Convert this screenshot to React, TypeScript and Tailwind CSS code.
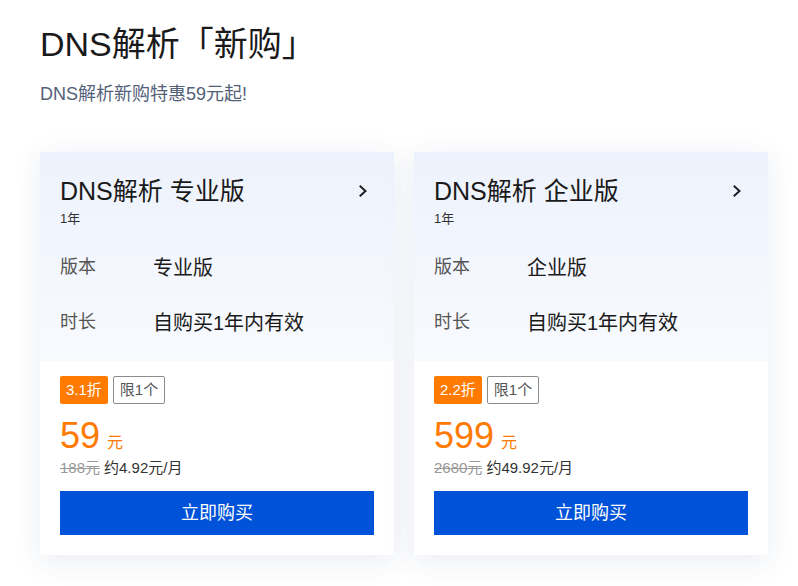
import React from "react";

const font = { fontFamily: '"Liberation Sans", "Noto Sans CJK SC", sans-serif' };

type Plan = {
  name: string;
  edition: string;
  discount: string;
  price: string;
  original: string;
  monthly: string;
};

const plans: Plan[] = [
  { name: "DNS解析 专业版", edition: "专业版", discount: "3.1折", price: "59", original: "188元", monthly: "约4.92元/月" },
  { name: "DNS解析 企业版", edition: "企业版", discount: "2.2折", price: "599", original: "2680元", monthly: "约49.92元/月" },
];

function Chevron() {
  return (
    <svg width="14" height="14" viewBox="0 0 14 14" className="mr-[4px]">
      <path d="M4.5 2.5 L9.5 7 L4.5 11.5" fill="none" stroke="#1f1f1f" strokeWidth="2" strokeLinecap="square" strokeLinejoin="miter" />
    </svg>
  );
}

function Card({ p }: { p: Plan }) {
  return (
    <div className="w-[354px] shrink-0 bg-white shadow-[0_6px_28px_rgba(20,50,120,0.09)]">
      <div className="bg-gradient-to-b from-[#edf2fc] to-[#f8fafe] px-[20px] pt-[23px] pb-[11px]">
        <div className="flex items-center justify-between">
          <div className="text-[25px] leading-[32px] text-[#1a1a1a]">{p.name}</div>
          <Chevron />
        </div>
        <div className="mt-[2px] text-[13px] leading-[20px] text-[#333]">1年</div>
        <div className="mt-[11px]">
          <div className="flex h-[55px] items-center">
            <div className="w-[93px] text-[18px] text-[#555]">版本</div>
            <div className="text-[20px] text-[#1a1a1a]">{p.edition}</div>
          </div>
          <div className="flex h-[55px] items-center">
            <div className="w-[93px] text-[18px] text-[#555]">时长</div>
            <div className="text-[20px] text-[#1a1a1a]">自购买1年内有效</div>
          </div>
        </div>
      </div>
      <div className="px-[20px] pt-[15px] pb-[20px]">
        <div className="flex gap-[5px]">
          <span className="flex h-[28px] items-center rounded-[2px] bg-[#ff7a00] px-[6px] text-[15px] text-white">{p.discount}</span>
          <span className="flex h-[28px] items-center rounded-[2px] border border-[#8c8c8c] px-[6px] text-[15px] text-[#555]">限1个</span>
        </div>
        <div className="mt-[12px] flex items-baseline text-[#ff7a00]">
          <span className="text-[36px] leading-[40px]">{p.price}</span>
          <span className="ml-[7px] text-[16px]">元</span>
        </div>
        <div className="flex h-[24px] items-center text-[15px]">
          <span className="text-[#999] line-through">{p.original}</span>
          <span className="ml-[4px] text-[#333]">{p.monthly}</span>
        </div>
        <button className="mt-[11px] flex h-[44px] w-full items-center justify-center bg-[#0052d9] text-[18px] text-white">
          立即购买
        </button>
      </div>
    </div>
  );
}

export default function App() {
  return (
    <div className="min-h-[586px] bg-white px-[40px] pt-[20px]" style={font}>
      <h1 className="text-[34px] leading-[48px] text-[#1a1a1a]">DNS解析「新购」</h1>
      <p className="mt-[12px] text-[18px] leading-[28px] text-[#536179]">DNS解析新购特惠59元起!</p>
      <div className="mt-[44px] flex gap-[20px]">
        {plans.map((p) => (
          <Card key={p.name} p={p} />
        ))}
      </div>
    </div>
  );
}
